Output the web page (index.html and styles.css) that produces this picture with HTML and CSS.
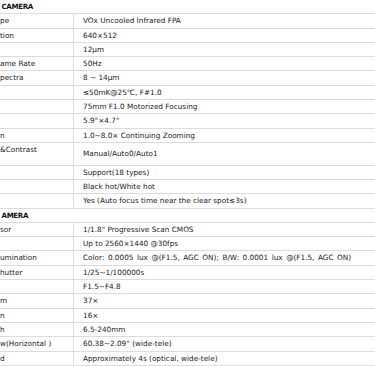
FILE: index.html
```html
<!DOCTYPE html>
<html lang="en">
<head>
<meta charset="utf-8">
<title>Specifications</title>
<link rel="stylesheet" href="styles.css">
</head>
<body>
<div class="sheet">
<table class="spec">
<colgroup><col class="c-lbl"><col class="c-val"></colgroup>
<tbody>
<tr class="head"><td colspan="2">CAMERA</td></tr>
<tr><td class="lbl">pe</td><td class="val">VOx Uncooled Infrared FPA</td></tr>
<tr><td class="lbl">tion</td><td class="val">640×512</td></tr>
<tr><td class="lbl"></td><td class="val">12μm</td></tr>
<tr><td class="lbl">ame Rate</td><td class="val">50Hz</td></tr>
<tr><td class="lbl">pectra</td><td class="val">8 ~ 14μm</td></tr>
<tr><td class="lbl"></td><td class="val">≤50mK@25℃, F#1.0</td></tr>
<tr><td class="lbl"></td><td class="val">75mm F1.0 Motorized Focusing</td></tr>
<tr><td class="lbl"></td><td class="val">5.9°×4.7°</td></tr>
<tr><td class="lbl">n</td><td class="val">1.0~8.0× Continuing Zooming</td></tr>
<tr class="tall"><td class="lbl">&amp;Contrast</td><td class="val">Manual/Auto0/Auto1</td></tr>
<tr><td class="lbl"></td><td class="val">Support(18 types)</td></tr>
<tr><td class="lbl"></td><td class="val">Black hot/White hot</td></tr>
<tr><td class="lbl"></td><td class="val">Yes (Auto focus time near the clear spot≤3s)</td></tr>
<tr class="head"><td colspan="2">AMERA</td></tr>
<tr><td class="lbl">sor</td><td class="val">1/1.8" Progressive Scan CMOS</td></tr>
<tr><td class="lbl"></td><td class="val">Up to 2560×1440 @30fps</td></tr>
<tr><td class="lbl">umination</td><td class="val wide">Color: 0.0005 lux @(F1.5, AGC ON); B/W: 0.0001 lux @(F1.5, AGC ON)</td></tr>
<tr><td class="lbl">hutter</td><td class="val">1/25~1/100000s</td></tr>
<tr><td class="lbl"></td><td class="val">F1.5~F4.8</td></tr>
<tr><td class="lbl">m</td><td class="val">37×</td></tr>
<tr><td class="lbl">n</td><td class="val">16×</td></tr>
<tr><td class="lbl">h</td><td class="val">6.5-240mm</td></tr>
<tr><td class="lbl">w(Horizontal )</td><td class="val">60.38~2.09° (wide-tele)</td></tr>
<tr><td class="lbl">d</td><td class="val">Approximately 4s (optical, wide-tele)</td></tr>
</tbody>
</table>
</div>
</body>
</html>
```
FILE: styles.css
```css
html, body {
  margin: 0;
  padding: 0;
  background: #ffffff;
}

.sheet {
  width: 375px;
  height: 366px;
  overflow: hidden;
}

.spec {
  border-collapse: collapse;
  width: 400px;
  table-layout: fixed;
  font-family: "DejaVu Sans", Verdana, sans-serif;
  font-size: 7.3px;
  color: #222222;
}

.c-lbl {
  width: 73px;
}

.spec td {
  border: 1px solid #dcdcdc;
  padding: 0;
  line-height: 13.3px;
  height: 13.3px;
  white-space: nowrap;
  overflow: hidden;
  vertical-align: middle;
}

.spec tr:first-child td {
  border-top: none;
}

.spec td:first-child {
  border-left: none;
}

.spec .lbl {
  padding-left: 0;
}

.spec .val {
  padding-left: 9.5px;
}

.spec .val.wide {
  word-spacing: 1.2px;
}

.spec .head td {
  font-weight: bold;
  font-size: 7.1px;
  letter-spacing: -0.35px;
  padding-left: 1.5px;
  color: #111111;
}

.spec .tall td {
  height: 21.7px;
}

.spec .tall .lbl {
  vertical-align: top;
}
```
